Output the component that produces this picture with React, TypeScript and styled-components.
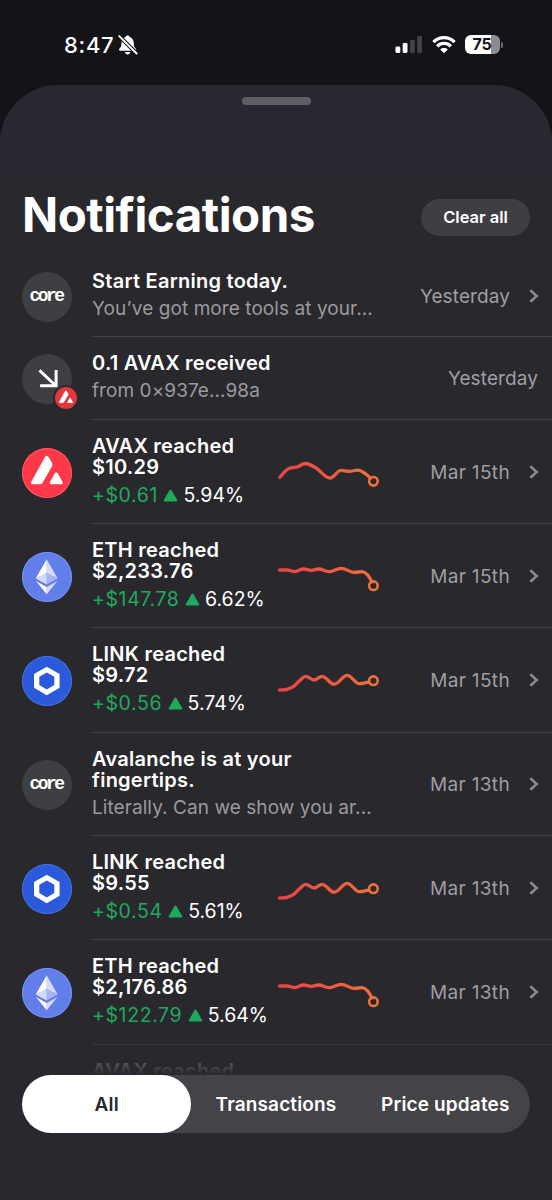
import React from 'react';
import styled, { createGlobalStyle } from 'styled-components';

const GlobalStyle = createGlobalStyle`
  * { box-sizing: border-box; }
  body {
    margin: 0;
    background: #141418;
    color: #fff;
    font-family: Inter, "Liberation Sans", sans-serif;
  }
`;

const Screen = styled.div`
  position: relative;
  width: 552px;
  height: 1200px;
  overflow: hidden;
  display: flex;
  flex-direction: column;
  background: #141418;
`;

const StatusBar = styled.div`
  flex: none;
  height: 85px;
  padding: 4px 49px 0 64px;
  display: flex;
  align-items: center;
`;

const Clock = styled.span`
  font-size: 22px;
  font-weight: 500;
  letter-spacing: 0.7px;
  line-height: 24px;
  margin-right: 4px;
`;

const StatusIcons = styled.div`
  margin-left: auto;
  display: flex;
  align-items: center;
  gap: 9px;
`;

const Battery = styled.div`
  width: 35px;
  height: 19px;
  padding-right: 1px;
  border-radius: 6px;
  background: linear-gradient(to right, #fff 75%, #8d8d90 75%);
  color: #141418;
  font-size: 16px;
  font-weight: 700;
  line-height: 19px;
  letter-spacing: -0.3px;
  text-align: center;
`;

const BatteryCap = styled.div`
  width: 2px;
  height: 6px;
  margin-left: -8px;
  border-radius: 0 2px 2px 0;
  background: #6f6f73;
`;

const Sheet = styled.main`
  flex: 1;
  min-height: 0;
  overflow: hidden;
  border-radius: 58px 58px 0 0;
  background: linear-gradient(#282830 0 95px, #29282d 95px);
  display: flex;
  flex-direction: column;
`;

const Handle = styled.div`
  flex: none;
  width: 69px;
  height: 8px;
  margin: 12px auto 0;
  border-radius: 4px;
  background: #5e5e64;
`;

const Header = styled.header`
  flex: none;
  height: 150px;
  padding: 73px 22px 0 22px;
  display: flex;
  justify-content: space-between;
  align-items: center;
`;

const Heading = styled.h1`
  margin: 0 0 4px;
  font-size: 47.5px;
  font-weight: 700;
  line-height: 56px;
  letter-spacing: -0.5px;
`;

const ClearButton = styled.button`
  width: 109px;
  height: 37px;
  margin-top: 2px;
  padding: 0;
  border: 0;
  border-radius: 19px;
  background: #3e3e43;
  color: #fff;
  font: 600 16.5px/37px Inter, "Liberation Sans", sans-serif;
  letter-spacing: 0;
`;

const List = styled.ul`
  margin: 0;
  padding: 0 0 0 22px;
  list-style: none;
`;

const Row = styled.li<{ $height: number }>`
  height: ${(p) => p.$height}px;
  display: flex;
`;

const IconSlot = styled.div`
  flex: none;
  width: 70px;
  padding-top: 1px;
  display: flex;
  align-items: center;
`;

const Avatar = styled.div<{ $bg: string; $ring?: string }>`
  position: relative;
  width: 50px;
  height: 50px;
  border-radius: 50%;
  background: ${(p) => p.$bg};
  box-shadow: inset 0 0 0 1px ${(p) => p.$ring ?? 'transparent'};

  > svg {
    display: block;
  }
`;

const Badge = styled.div`
  position: absolute;
  left: 31px;
  top: 31px;
  width: 26px;
  height: 26px;
  border: 2px solid #29282d;
  border-radius: 50%;
  background: #e4373c;
`;

const RowBody = styled.div<{ $inset: number }>`
  flex: 1;
  min-width: 0;
  padding-right: ${(p) => p.$inset}px;
  border-bottom: 1px solid #414146;
  display: flex;
  align-items: center;
`;

const Copy = styled.div<{ $wide: boolean }>`
  flex: none;
  align-self: flex-start;
  width: ${(p) => (p.$wide ? 288 : 184)}px;
  padding-top: 16px;
`;

const Title = styled.div`
  font-size: 20px;
  font-weight: 600;
  line-height: 20.7px;
  letter-spacing: 0.25px;
`;

const Subtitle = styled.div`
  margin-top: 5.5px;
  font-size: 19px;
  line-height: 24px;
  letter-spacing: 0.07px;
  color: #9b9a9f;
  white-space: nowrap;
`;

const Change = styled.div`
  margin-top: 6px;
  display: flex;
  align-items: center;
  font-size: 19.5px;
  line-height: 24px;
  white-space: nowrap;
`;

const Gain = styled.span`
  color: #1fa95e;
  letter-spacing: 0.6px;
`;

const UpMark = styled.svg`
  margin: 0 5px 0 5.5px;
`;

const When = styled.time<{ $spacing: number }>`
  margin-left: auto;
  padding-top: 2px;
  font-size: 19px;
  line-height: 24px;
  letter-spacing: ${(p) => p.$spacing}px;
  color: #9f9ea3;
  white-space: nowrap;
`;

const Chevron = styled.svg`
  flex: none;
  margin-left: 18px;
`;

const Footer = styled.footer`
  position: absolute;
  left: 0;
  right: 0;
  bottom: 0;
  height: 182px;
  padding: 57px 22px 0;
  background: linear-gradient(rgba(40, 40, 46, 0), #28282e 57px);
`;

const Tabs = styled.nav`
  height: 58px;
  border-radius: 29px;
  background: #444348;
  display: flex;
`;

const Tab = styled.button<{ $active?: boolean }>`
  flex: 1;
  padding: 1px 0 0;
  border: 0;
  border-radius: 29px;
  background: ${(p) => (p.$active ? '#fff' : 'transparent')};
  color: ${(p) => (p.$active ? '#28282e' : '#fff')};
  font: 600 19px/57px Inter, "Liberation Sans", sans-serif;
  letter-spacing: 0.15px;
  white-space: nowrap;
`;

type Kind = 'core' | 'receive' | 'avax' | 'eth' | 'link';

const AvaxShapes = () => (
  <g fill="#fff" stroke="#fff" strokeWidth="2" strokeLinejoin="round">
    <path d="M24.7 8.8 Q25.4 8.8 26 9.9 L29.3 15.6 Q29.8 16.6 29.2 17.7 L19.6 34.2 Q18.9 35.3 17.8 35.3 L10.7 35.3 Q9.6 35.3 10.2 34.2 L23.6 9.9 Q24.1 8.8 24.7 8.8 Z" />
    <path d="M34.3 25.6 Q34.8 25.6 35.2 26.3 L39.6 34.2 Q40.1 35.3 39.1 35.3 L29.5 35.3 Q28.5 35.3 29 34.2 L33.4 26.3 Q33.8 25.6 34.3 25.6 Z" />
  </g>
);

const KindIcon = ({ kind }: { kind: Kind }) => {
  switch (kind) {
    case 'core':
      return (
        <Avatar $bg="#3e3e43">
          <svg width="50" height="50">
            <text x="7.4" y="29.2" fill="#fff" fontFamily="Liberation Mono, monospace" fontWeight="700" fontSize="18" letterSpacing="-2.5">core</text>
          </svg>
        </Avatar>
      );
    case 'receive':
      return (
        <Avatar $bg="#3e3e43">
          <svg width="50" height="50" fill="none" stroke="#fff" strokeWidth="3">
            <path d="M17.5 16.4 L33 31 M34.1 16 V31.800 H18.100" />
          </svg>
          <Badge>
            <svg width="22" height="22" viewBox="0 0 50 50"><AvaxShapes /></svg>
          </Badge>
        </Avatar>
      );
    case 'avax':
      return (
        <Avatar $bg="#ff394a" $ring="#ff5563">
          <svg width="50" height="50"><AvaxShapes /></svg>
        </Avatar>
      );
    case 'eth':
      return (
        <Avatar $bg="#627eea" $ring="#7690f0">
          <svg width="50" height="50" fill="#fff">
            <path d="M24.7 7.3 L13.7 26.6 L24.7 20.8 Z" />
            <path d="M24.7 7.3 V20.8 L35.7 26.6 Z" opacity=".72" />
            <path d="M13.7 26.6 L24.7 20.8 V32.4 Z" opacity=".72" />
            <path d="M24.7 20.8 L35.7 26.6 L24.7 32.4 Z" opacity=".42" />
            <path d="M14 28.9 L24.7 34.9 V42.2 Z" />
            <path d="M24.7 34.9 L35.4 28.9 L24.7 42.2 Z" opacity=".72" />
          </svg>
        </Avatar>
      );
    case 'link':
      return (
        <Avatar $bg="#2a5ada" $ring="#4470e0">
          <svg width="50" height="50" fill="#fff" fillRule="evenodd">
            <path d="M24.8 10.8 L37.6 18 V31.8 L24.8 39.2 L12 31.8 V18 Z M24.8 16.6 L17.3 20.8 V29.1 L24.8 33.4 L32.3 29.1 V20.8 Z" />
          </svg>
        </Avatar>
      );
  }
};

type Point = [number, number];

// Sparkline points share a 104 x 48 box; the last one carries the end marker.
const series: Record<'avax' | 'eth' | 'link', Point[]> = {
  avax: [[3.7, 29.3], [12.2, 20.8], [21, 19], [29.5, 15.5], [39.3, 19.5], [54.3, 30], [65, 22.3], [73, 23.3], [82, 22.2], [89.3, 25.7], [94.5, 30]],
  eth: [[3.7, 18], [11, 18], [18.7, 19.6], [27.5, 17], [35.3, 18.3], [42.7, 17], [52.7, 19.7], [65.3, 16.3], [78.3, 20.4], [86, 19.6], [91.3, 22.6], [96, 29.8]],
  link: [[3.7, 34], [11, 33.3], [17.7, 30.3], [24.3, 24], [29.7, 20.3], [38, 24], [46, 20.3], [58, 28.2], [71.3, 19.3], [83.3, 27.7], [92.5, 26.2]],
};
const ends: Record<'avax' | 'eth' | 'link', Point> = { avax: [97.4, 33.3], eth: [97.4, 33.7], link: [97.4, 24.7] };

const smooth = (pts: Point[]) => {
  let d = `M${pts[0][0]} ${pts[0][1]}`;
  for (let i = 0; i < pts.length - 1; i++) {
    const a = pts[Math.max(i - 1, 0)];
    const b = pts[i];
    const c = pts[i + 1];
    const e = pts[Math.min(i + 2, pts.length - 1)];
    const s = (c[0] - b[0]) / 2.6;
    const slope = (p: Point, q: Point, r: Point) => {
      const l = r[0] === q[0] ? 0 : (r[1] - q[1]) / (r[0] - q[0]);
      const k = q[0] === p[0] ? l : (q[1] - p[1]) / (q[0] - p[0]);
      if (r[0] === q[0]) return k;
      return l * k <= 0 ? 0 : (l + k) / 2;
    };
    d += ` C${b[0] + s} ${b[1] + s * slope(a, b, c)} ${c[0] - s} ${c[1] - s * slope(b, c, e)} ${c[0]} ${c[1]}`;
  }
  return d;
};

const Sparkline = ({ token }: { token: 'avax' | 'eth' | 'link' }) => (
  <svg width="104" height="48" fill="none" strokeWidth="3.3" strokeLinecap="round">
    <defs>
      <linearGradient id={`heat-${token}`} gradientUnits="userSpaceOnUse" x1="0" y1="0" x2="104" y2="0">
        <stop offset="0" stopColor="#e8424a" />
        <stop offset="1" stopColor="#f0733a" />
      </linearGradient>
    </defs>
    <path d={smooth(series[token])} stroke={`url(#heat-${token})`} />
    <circle cx={ends[token][0]} cy={ends[token][1]} r="4.3" stroke="#f0703c" strokeWidth="2.6" />
  </svg>
);

interface Item {
  kind: Kind;
  title: string;
  when: string;
  height: number;
  subtitle?: string;
  gain?: string;
  percent?: string;
  static?: boolean;
}

const items: Item[] = [
  { kind: 'core', title: 'Start Earning today.', subtitle: 'You’ve got more tools at your...', when: 'Yesterday', height: 82 },
  { kind: 'receive', title: '0.1 AVAX received', subtitle: 'from 0×937e...98a', when: 'Yesterday', height: 83, static: true },
  { kind: 'avax', title: 'AVAX reached $10.29', gain: '+$0.61', percent: '5.94%', when: 'Mar 15th', height: 104 },
  { kind: 'eth', title: 'ETH reached $2,233.76', gain: '+$147.78', percent: '6.62%', when: 'Mar 15th', height: 104 },
  { kind: 'link', title: 'LINK reached $9.72', gain: '+$0.56', percent: '5.74%', when: 'Mar 15th', height: 105 },
  { kind: 'core', title: 'Avalanche is at your fingertips.', subtitle: 'Literally. Can we show you ar...', when: 'Mar 13th', height: 103 },
  { kind: 'link', title: 'LINK reached $9.55', gain: '+$0.54', percent: '5.61%', when: 'Mar 13th', height: 104 },
  { kind: 'eth', title: 'ETH reached $2,176.86', gain: '+$122.79', percent: '5.64%', when: 'Mar 13th', height: 105 },
  { kind: 'avax', title: 'AVAX reached', when: '', height: 104, static: true },
];

const Notification = ({ item }: { item: Item }) => (
  <Row $height={item.height}>
    <IconSlot>
      <KindIcon kind={item.kind} />
    </IconSlot>
    <RowBody $inset={item.static ? 14 : 12}>
      <Copy $wide={!item.gain}>
        <Title>{item.title}</Title>
        {item.subtitle && <Subtitle>{item.subtitle}</Subtitle>}
        {item.gain && (
          <Change>
            <Gain>{item.gain}</Gain>
            <UpMark width="15" height="13">
              <path d="M7.5 1.5 L13.3 11.5 H1.7 Z" fill="#1fa95e" stroke="#1fa95e" strokeWidth="2" strokeLinejoin="round" />
            </UpMark>
            <span>{item.percent}</span>
          </Change>
        )}
      </Copy>
      {item.gain && <Sparkline token={item.kind as 'avax' | 'eth' | 'link'} />}
      <When $spacing={item.when === 'Yesterday' ? 0.1 : 0.35}>{item.when}</When>
      {!item.static && (
        <Chevron width="12" height="16" fill="none" stroke="#8b8b90" strokeWidth="2.6">
          <path d="M2.4 2.2 L8.6 8 L2.4 13.8" />
        </Chevron>
      )}
    </RowBody>
  </Row>
);

const BellSlash = () => (
  <svg width="20" height="22" viewBox="0 0 20 22">
    <path d="M9.6 1.4 c1.1 0 1.9 .7 2 1.6 c2.6 .8 4 3 4.1 5.7 c.1 3.3 .8 4.6 2 5.9 c.9 1 .5 2.2 -.8 2.2 H2.3 c-1.3 0 -1.7 -1.2 -.8 -2.2 c1.2 -1.3 1.9 -2.6 2 -5.9 C3.6 6 5 3.8 7.6 3 c.1 -.9 .9 -1.6 2 -1.6 z M6.9 18 h5.4 c-.3 1.5 -1.3 2.4 -2.7 2.4 s-2.4 -.9 -2.7 -2.4 z" fill="#fff" />
    <path d="M1 1.9 L18.8 19.7" stroke="#141418" strokeWidth="4" />
    <path d="M1.2 2.1 L18.6 19.5" stroke="#fff" strokeWidth="1.9" strokeLinecap="round" />
  </svg>
);

const Signal = () => (
  <svg width="28" height="19">
    <rect x="0.5" y="11.5" width="4.8" height="6.5" rx="1.4" fill="#fff" />
    <rect x="7.7" y="8" width="4.8" height="10" rx="1.4" fill="#fff" />
    <rect x="15" y="4.8" width="4.8" height="13.2" rx="1.4" fill="#434347" />
    <rect x="22.2" y="1" width="4.8" height="17" rx="1.4" fill="#434347" />
  </svg>
);

const Wifi = () => (
  <svg width="24" height="19" fill="none" stroke="#fff" strokeWidth="3.2">
    <path d="M1.4 7.2 C7.3 1.2 16.7 1.2 22.6 7.2" />
    <path d="M5.2 11.3 C9 7.5 15 7.5 18.8 11.3" />
    <path d="M12 18.3 L8.2 14.5 C10.4 12.6 13.6 12.6 15.8 14.5 Z" fill="#fff" stroke="none" />
  </svg>
);

export default function App() {
  return (
    <>
      <GlobalStyle />
      <Screen>
        <StatusBar>
          <Clock>8:47</Clock>
          <BellSlash />
          <StatusIcons>
            <Signal />
            <Wifi />
            <Battery>75</Battery>
            <BatteryCap />
          </StatusIcons>
        </StatusBar>
        <Sheet>
          <Handle />
          <Header>
            <Heading>Notifications</Heading>
            <ClearButton>Clear all</ClearButton>
          </Header>
          <List>
            {items.map((item, i) => (
              <Notification key={i} item={item} />
            ))}
          </List>
        </Sheet>
        <Footer>
          <Tabs>
            <Tab $active>All</Tab>
            <Tab>Transactions</Tab>
            <Tab>Price updates</Tab>
          </Tabs>
        </Footer>
      </Screen>
    </>
  );
}
